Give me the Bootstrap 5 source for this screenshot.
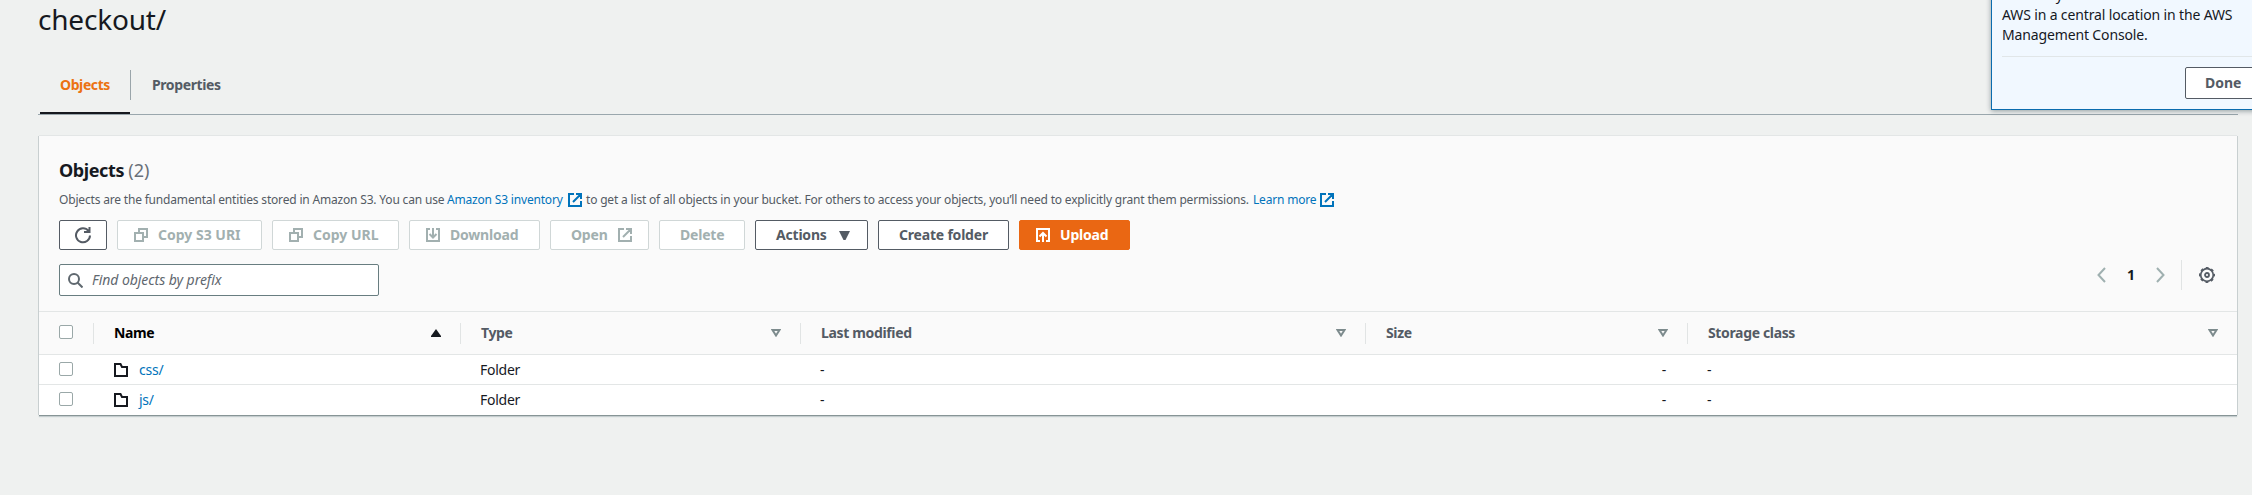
<!DOCTYPE html>
<html lang="en">
<head>
<meta charset="utf-8">
<title>checkout/ - S3</title>
<link href="https://cdn.jsdelivr.net/npm/bootstrap@5.3.0/dist/css/bootstrap.min.css" rel="stylesheet">
<style>
body{background:#eff1f0;color:#16191f;font-family:"Noto Sans","Open Sans",sans-serif;font-size:14px;line-height:20px;height:495px;overflow:hidden;position:relative}
a{color:#0073bb;text-decoration:none}
svg{display:block;flex:none;fill:none;stroke:currentColor;stroke-width:2}
.page{padding:0 14px 0 38px}
h1.title{font-size:28px;line-height:36px;font-weight:400;height:64px;padding:1px 0 0;margin:0;letter-spacing:-.2px}
.tabs{height:51px;border-bottom:1px solid #9aa7ad;padding-left:2px;font-weight:700;letter-spacing:-.4px}
.tabs .nav-link{padding:11px 20px 0 21px;height:50px;line-height:20px;color:#545b64}
.tabs .nav-link.active{color:#ec7211;border-bottom:2px solid #16191f;width:90px;padding-left:20px}
.tabs .sep{width:1px;height:30px;background:#9aa5aa;margin-top:6px}
.panel{margin:21px 0 0 1px;width:2198px;height:279px;background:#fff;box-shadow:0 1px 0 #879596,0 2px 1px #c5cdcf,-1px 0 0 #c9cfd0,1px 0 0 #c9cfd0,0 -1px 0 #e3e6e6}
.panel-top{background:#fafafa;height:176px;padding:20px 20px 0 20px;border-bottom:1px solid #e3e6e6}
h2.heading{font-size:18px;line-height:28px;font-weight:700;margin:0;letter-spacing:-.4px}
h2.heading span{font-weight:400;color:#687078;letter-spacing:0}
.desc{font-size:12px;line-height:16px;color:#545b64;height:16px;margin-top:8px;letter-spacing:-.18px;white-space:nowrap}
.desc svg{color:#0073bb;margin:0 4px}
.s1{width:388px}.s2{width:117px}.s3{width:667px}.s4{width:63px}
.tools{margin-top:12px;gap:10px}
.tools .btn,.done{height:30px;border:1px solid #545b64;border-radius:2px;background:#fff;color:#545b64;font-weight:700;font-size:14px;line-height:20px;padding:0 0 0 20px;display:flex;align-items:center;gap:10px;white-space:nowrap}
.tools .btn.ico{padding-left:16px}
.tools .btn.off{color:#a2b0b0;border-color:#d0d7d7}
.tools .btn.up{background:#ea6713;border-color:#ea6713;color:#fff}
.b48{width:48px}.b145{width:145px}.b127{width:127px}.b131{width:131px}.b99{width:99px}.b86{width:86px}.b113{width:113px}.b111{width:111px}
.nar{letter-spacing:-.2px}
.search{width:320px;height:32px;border:1px solid #687d80;border-radius:2px;background:#fff;color:#5f686f;font-style:italic;margin-top:14px;padding-left:8px;gap:9px;letter-spacing:-.05px}
.pager{height:30px;margin-top:10px;color:#9fb0b0}
.pager b{color:#16191f;width:50px;text-align:center}
.pager .bar{width:1px;height:30px;background:#e1e4e4;margin:0 17px 0 16px}
.pager .gear{color:#545b64;margin-right:2px}
.cols{display:grid;grid-template-columns:55px 367px 340px 565px 322px 549px}
.head{height:42px;background:#fafafa;font-weight:700;color:#545b64;align-items:center;letter-spacing:-.35px}
.head>div{height:21px;display:flex;align-items:center;border-right:1px solid #e1e4e4;padding:0 19px 0 20px}
.head>div:last-child{border:0}
.head svg{margin-left:auto;color:#7d8b8d}
.line{height:30px;align-items:center;border-top:1px solid #e3e6e6;letter-spacing:-.25px}
.line>div{padding:0 22px 0 19px;display:flex;align-items:center}
.line>div:first-child{padding-left:20px}
.line>.file{padding-left:20px;gap:11px}
.box{width:14px;height:14px;border:1px solid #9aa8a8;border-radius:2px;background:#fff;flex:none;margin-top:-2px}
.pop{position:absolute;left:1991px;top:-80px;width:290px;height:190px;background:#f1f8ff;border:1px solid #0a6cae;box-shadow:0 1px 5px rgba(0,28,36,.4);padding:64px 0 0 10px}
.pop p{line-height:20px;margin:0;white-space:nowrap;letter-spacing:-.14px}
.pop .foot{border-top:1px solid #e1e6e8;margin-top:11px;padding:10px 0 0 183px}
.done{width:88px;height:32px;padding-left:19px}
</style>
</head>
<body>
<svg class="d-none"><defs>
<g id="ext"><path d="M6 1H1v12h12V8M8 1h5v5M13 1 5 9"/></g>
<g id="copy"><path d="M1 5h8v8H1zM5 5V1h8v8H9"/></g>
<g id="sort"><path d="M1.5 1h7L5 6.5z"/></g>
<g id="folder"><path d="M1 1h5.5l1.5 3H13v9H1z"/></g>
</defs></svg>
<main class="page">
<h1 class="title">checkout/</h1>
<nav class="nav tabs"><a class="nav-link active" href="#">Objects</a><span class="sep"></span><a class="nav-link" href="#">Properties</a></nav>
<section class="panel">
<div class="panel-top">
<h2 class="heading">Objects <span>(2)</span></h2>
<div class="desc d-flex align-items-center"><span class="s1">Objects are the fundamental entities stored in Amazon S3. You can use</span><a class="s2" href="#">Amazon S3 inventory</a><svg width="14" height="14"><use href="#ext"/></svg><span class="s3">to get a list of all objects in your bucket. For others to access your objects, you’ll need to explicitly grant them permissions.</span><a class="s4" href="#">Learn more</a><svg width="14" height="14"><use href="#ext"/></svg></div>
<div class="tools d-flex">
<button class="btn b48 ps-0 justify-content-center" aria-label="Refresh"><svg width="18" height="18"><path d="M14.500 5A7 7 0 1 0 16 9.500M15.500 1v5h-5.500"/></svg></button>
<button class="btn off ico b145"><svg width="14" height="14"><use href="#copy"/></svg>Copy S3 URI</button>
<button class="btn off ico b127"><svg width="14" height="14"><use href="#copy"/></svg>Copy URL</button>
<button class="btn off ico b131 nar"><svg width="14" height="14"><path d="M4 1H1v12h12V1h-3M7 0v9M3.500 6 7 9.500 10.500 6"/></svg>Download</button>
<button class="btn off b99 nar">Open<svg width="14" height="14"><use href="#ext"/></svg></button>
<button class="btn off b86 nar">Delete</button>
<button class="btn b113 nar">Actions<svg style="margin-left:2px" width="11" height="9"><path fill="currentColor" stroke="none" d="M0 0h11L6.500 9h-2z"/></svg></button>
<button class="btn b131 nar">Create folder</button>
<button class="btn up ico b111 nar"><svg width="14" height="14"><path d="M4 13H1V1h12v12h-3M7 14V5M3.500 8.500 7 5l3.500 3.500"/></svg>Upload</button>
</div>
<div class="d-flex justify-content-between align-items-start">
<div class="search d-flex align-items-center"><svg width="15" height="15"><circle cx="6" cy="6" r="5"/><path d="m9.500 9.500 5 5"/></svg>Find objects by prefix</div>
<div class="pager d-flex align-items-center"><svg width="9" height="16"><path d="M8 1 1.500 8 8 15"/></svg><b>1</b><svg width="9" height="16"><path d="m1 1 6.500 7L1 15"/></svg><span class="bar"></span><svg class="gear" width="16" height="16" viewBox="0 0 16 16"><circle cx="8" cy="8" r="6.300" stroke-width="1.700"/><circle cx="8" cy="8" r="7.300" stroke-width="1.400" stroke-dasharray="2.900 2.833" stroke-dashoffset="1.450"/><circle cx="8" cy="8" r="2" stroke-width="1.800"/></svg></div>
</div>
</div>
<div class="cols head">
<div><span class="box"></span></div>
<div class="text-black">Name<svg width="10" height="8" style="color:#16191f"><path fill="currentColor" stroke="none" d="M5 0 10 7v1H0V7z"/></svg></div>
<div>Type<svg width="10" height="8"><use href="#sort"/></svg></div>
<div>Last modified<svg width="10" height="8"><use href="#sort"/></svg></div>
<div>Size<svg width="10" height="8"><use href="#sort"/></svg></div>
<div>Storage class<svg width="10" height="8"><use href="#sort"/></svg></div>
</div>
<div class="cols line"><div><span class="box"></span></div><div class="file"><svg width="14" height="14"><use href="#folder"/></svg><a href="#">css/</a></div><div>Folder</div><div>-</div><div class="justify-content-end">-</div><div>-</div></div>
<div class="cols line"><div><span class="box"></span></div><div class="file"><svg width="14" height="14"><use href="#folder"/></svg><a href="#">js/</a></div><div>Folder</div><div>-</div><div class="justify-content-end">-</div><div>-</div></div>
</section>
</main>
<aside class="pop"><p>enables you to view notifications for</p><p>AWS in a central location in the AWS</p><p>Management Console.</p><div class="foot"><button class="done">Done</button></div></aside>
<script src="https://cdn.jsdelivr.net/npm/bootstrap@5.3.0/dist/js/bootstrap.bundle.min.js"></script>
</body>
</html>
